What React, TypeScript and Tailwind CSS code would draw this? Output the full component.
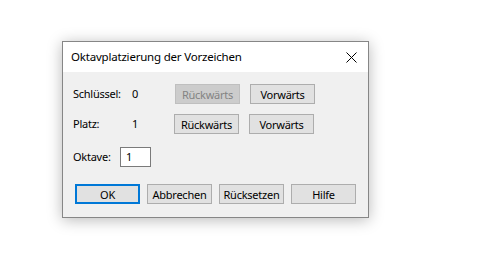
import React from "react";

const font = { fontFamily: '"Noto Sans", "Open Sans", sans-serif' };

function Btn({ children, disabled, def, className = "" }: { children: React.ReactNode; disabled?: boolean; def?: boolean; className?: string }) {
  let cls = "border-[#adadad] bg-[#e1e1e1] text-black";
  if (disabled) cls = "border-[#bfbfbf] bg-[#cccccc] text-[#838383]";
  if (def) cls = "border-2 border-[#0078d7] bg-[#e1e1e1] text-black";
  return (
    <div className={`h-[20px] w-[65px] border flex items-center justify-center text-[11px] tracking-[-0.25px] leading-none ${cls} ${className}`}>
      {children}
    </div>
  );
}

export default function App() {
  return (
    <div className="w-[481px] h-[277px] bg-white overflow-hidden" style={font}>
      <div className="ml-[62px] mt-[41px] w-[307px] border border-[#868686] shadow-[0_2px_14px_rgba(0,0,0,0.28)] bg-[#f0f0f0]">
        <div className="h-[30px] bg-white flex items-center justify-between pl-[8px] pr-[10px]">
          <span className="text-[11.5px] tracking-[-0.2px] text-black leading-none">Oktavplatzierung der Vorzeichen</span>
          <svg width="11" height="11" viewBox="0 0 11 11" className="mr-[1px]">
            <path d="M0.5 0.5 L10.5 10.5 M10.5 0.5 L0.5 10.5" stroke="#000" strokeWidth="1" />
          </svg>
        </div>
        <div className="pt-[12px] pb-[13px] pl-[10px] text-[11px] tracking-[-0.25px] text-black">
          <div className="flex items-center h-[20px]">
            <span className="w-[59px]">Schlüssel:</span>
            <span className="w-[43px]">0</span>
            <Btn disabled>Rückwärts</Btn>
            <Btn className="ml-[10px]">Vorwärts</Btn>
          </div>
          <div className="flex items-center h-[20px] mt-[10px]">
            <span className="w-[59px]">Platz:</span>
            <span className="w-[42px]">1</span>
            <Btn>Rückwärts</Btn>
            <Btn className="ml-[10px]">Vorwärts</Btn>
          </div>
          <div className="flex items-center h-[20px] mt-[13px]">
            <span className="w-[47px]">Oktave:</span>
            <div className="h-[20px] w-[31px] border border-[#7a7a7a] bg-white flex items-center pl-[5px]">1</div>
          </div>
          <div className="flex items-center gap-[7px] mt-[17px] pl-[2px]">
            <Btn def>OK</Btn>
            <Btn>Abbrechen</Btn>
            <Btn>Rücksetzen</Btn>
            <Btn>Hilfe</Btn>
          </div>
        </div>
      </div>
    </div>
  );
}
